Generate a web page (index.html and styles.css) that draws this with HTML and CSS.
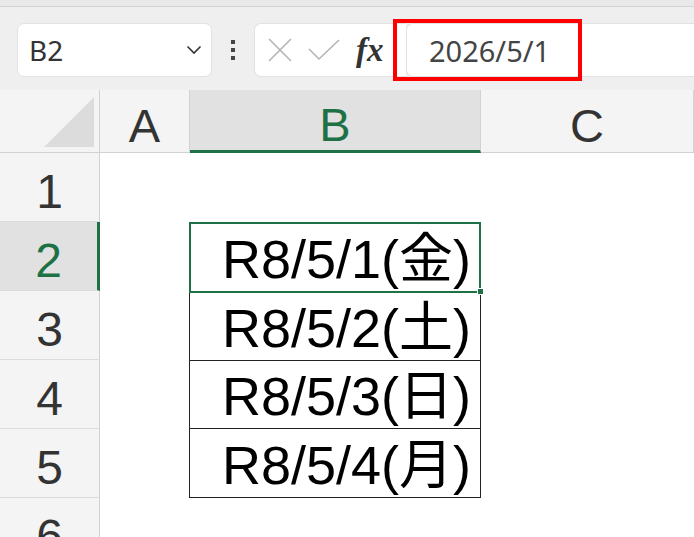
FILE: index.html
```html
<!DOCTYPE html>
<html lang="ja">

<head>
  <meta charset="UTF-8" />
  <meta name="viewport" content="width=device-width, initial-scale=1.0" />
  <title>Book1 - Excel</title>
  <link rel="stylesheet" href="styles.css">
</head>

<body>
  <div class="top-strip"></div>

  <div class="formula-row">
    <div class="name-box">
      <span>B2</span>
      <svg class="chevron" width="16" height="10" viewBox="0 0 16 10">
        <path d="M1.5 1.5 L8 8 L14.5 1.5" fill="none" stroke="#333" stroke-width="1.6" />
      </svg>
    </div>
    <div class="dots"><i></i><i></i><i></i></div>
    <div class="fx-box">
      <svg width="26" height="26" viewBox="0 0 26 26">
        <path d="M2 2 L24 24 M24 2 L2 24" stroke="#b4b4b4" stroke-width="1.6" />
      </svg>
      <svg width="32" height="22" viewBox="0 0 32 22">
        <path d="M1 10 L11 20 L31 1" fill="none" stroke="#b4b4b4" stroke-width="1.6" />
      </svg>
      <span class="fx">fx</span>
    </div>
    <div class="formula-input">
      <span>2026/5/1</span>
    </div>
    <div class="highlight"></div>
  </div>

  <div class="sheet">
    <div class="corner"><div class="tri"></div></div>
    <div class="col-head">A</div>
    <div class="col-head active">B</div>
    <div class="col-head">C</div>

    <div class="row-head">1</div>
    <div class="row-head active">2</div>
    <div class="row-head">3</div>
    <div class="row-head">4</div>
    <div class="row-head">5</div>
    <div class="row-head">6</div>

    <div class="date-box">
      <div class="cell selected">R8/5/1(金)<span class="handle"></span></div>
      <div class="cell">R8/5/2(土)</div>
      <div class="cell">R8/5/3(日)</div>
      <div class="cell">R8/5/4(月)</div>
    </div>
  </div>
</body>

</html>
```

FILE: styles.css
```css
body {
  margin: 0;
  width: 694px;
  height: 537px;
  overflow: hidden;
  background: #fff;
  font-family: 'Liberation Sans', 'Noto Sans CJK JP', sans-serif;
  color: #333;
}

.top-strip {
  height: 6px;
  background: #e9e9e9;
  border-bottom: 1px solid #d4d4d4;
}

/* name box + formula bar */
.formula-row {
  position: relative;
  height: 83px;
  background: #efefef;
  display: flex;
  align-items: center;
  padding: 3px 0 0 17px;
  box-sizing: border-box;
}

.name-box {
  width: 195px;
  height: 54px;
  background: #fff;
  border: 1px solid #e2e2e2;
  border-radius: 7px;
  box-sizing: border-box;
  display: flex;
  align-items: center;
  justify-content: space-between;
  padding: 0 9px 0 11px;
  font-family: 'Noto Sans', sans-serif;
  font-size: 28px;
  color: #333;
}

.dots {
  width: 42px;
  display: flex;
  flex-direction: column;
  align-items: center;
  gap: 4px;
}

.dots i {
  width: 4px;
  height: 4px;
  background: #444;
}

.fx-box {
  width: 152px;
  height: 54px;
  background: #fff;
  border: 1px solid #e2e2e2;
  border-right: none;
  border-radius: 7px 0 0 7px;
  box-sizing: border-box;
  display: flex;
  align-items: center;
  gap: 15px;
  padding-left: 12px;
}

.fx {
  font-family: 'Liberation Serif', serif;
  font-style: italic;
  font-weight: bold;
  font-size: 33px;
  color: #333;
  margin-left: 1px;
}

.formula-input {
  flex: 1;
  height: 54px;
  background: #fff;
  border: 1px solid #e2e2e2;
  border-right: none;
  border-radius: 7px 0 0 7px;
  box-sizing: border-box;
  display: flex;
  align-items: center;
  padding-left: 22px;
  font-family: 'Noto Sans', sans-serif;
  font-size: 29px;
  color: #444;
}

.highlight {
  position: absolute;
  left: 393px;
  top: 12px;
  width: 189px;
  height: 62px;
  border: 4px solid #f00;
  box-sizing: border-box;
}

/* grid */
.sheet {
  display: grid;
  grid-template-columns: 100px 90px 291px 1fr;
  grid-template-rows: 63px repeat(6, 69px);
}

.corner {
  background: #f4f4f4;
  border-right: 1px solid #d2d2d2;
  border-bottom: 1px solid #d2d2d2;
  position: relative;
}

.tri {
  position: absolute;
  right: 5px;
  bottom: 5px;
  width: 0;
  height: 0;
  border-left: 50px solid transparent;
  border-bottom: 50px solid #dcdcdc;
}

.col-head {
  background: #f4f4f4;
  border-right: 1px solid #d2d2d2;
  border-bottom: 1px solid #d2d2d2;
  display: flex;
  align-items: center;
  justify-content: center;
  font-size: 47px;
  color: #333;
  padding-top: 9px;
}

.col-head.active {
  background: #e1e1e1;
  color: #1e7145;
  border-bottom: 3px solid #1e7145;
}

.row-head {
  grid-column: 1;
  background: #f4f4f4;
  border-right: 1px solid #d2d2d2;
  border-bottom: 1px solid #dcdcdc;
  display: flex;
  align-items: center;
  justify-content: center;
  font-size: 48px;
  color: #333;
  padding-top: 8px;
}

.row-head.active {
  background: #e1e1e1;
  color: #1e7145;
  border-right: 3px solid #1e7145;
}

.date-box {
  grid-column: 3;
  grid-row: 3 / 7;
  margin-left: -1px;
  border: 1px solid #222;
  display: flex;
  flex-direction: column;
}

.cell {
  flex: 1;
  display: flex;
  align-items: flex-end;
  justify-content: flex-end;
  padding: 0 9px 5px 0;
  font-size: 54px;
  line-height: 1;
  color: #000;
  border-bottom: 1px solid #222;
  position: relative;
}

.cell:last-child {
  border-bottom: none;
}

.cell.selected {
  outline: 2px solid #1e7145;
  outline-offset: -1px;
}

.handle {
  position: absolute;
  right: -4px;
  bottom: -4px;
  width: 7px;
  height: 7px;
  background: #1e7145;
  border: 1px solid #fff;
  box-sizing: border-box;
  z-index: 2;
}
```
